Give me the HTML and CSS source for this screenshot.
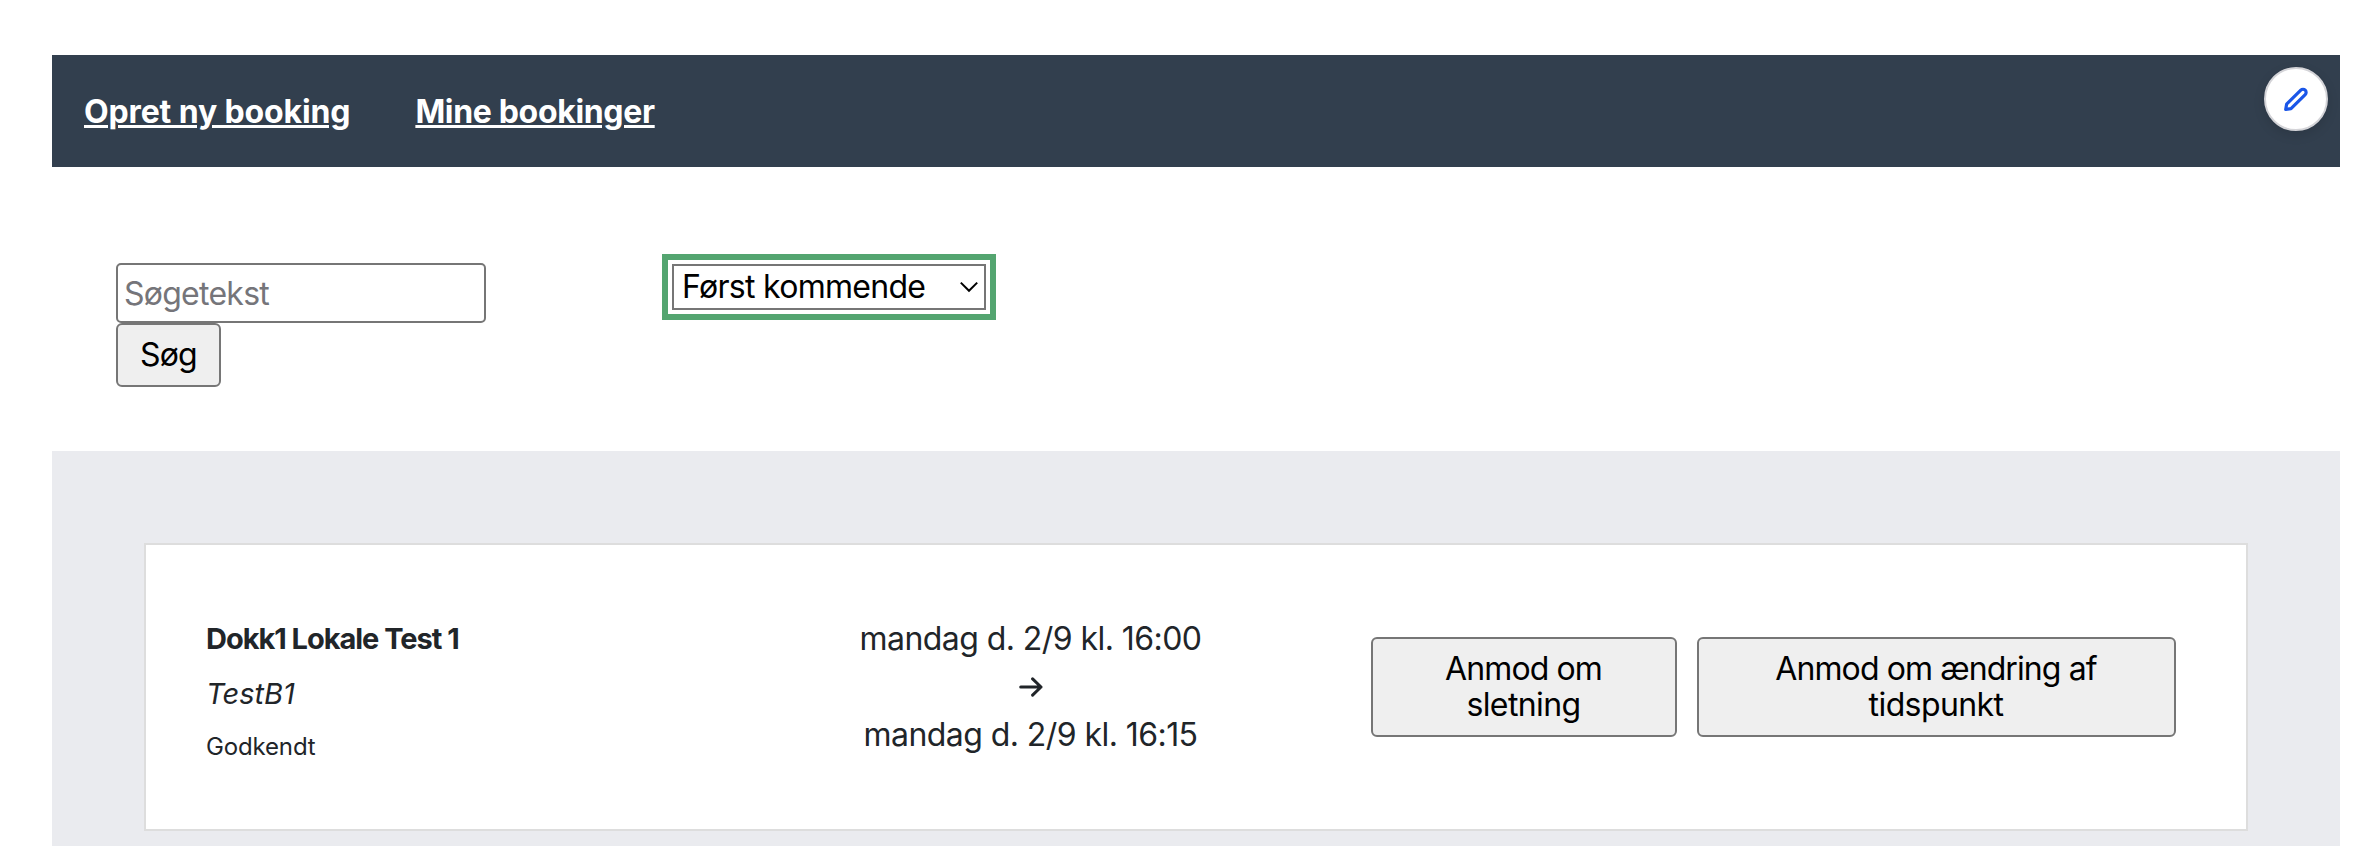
FILE: index.html
```
<!DOCTYPE html>
<html lang="da">
<head>
<meta charset="utf-8">
<title>Mine bookinger</title>
<link rel="stylesheet" href="styles.css">
</head>
<body>
<div class="page">
  <nav class="nav">
    <div class="nav-links">
      <a class="nav-link nav-create" href="#">Opret ny booking</a>
      <a class="nav-link nav-mine" href="#">Mine bookinger</a>
    </div>
    <button class="edit" aria-label="Rediger">
      <svg class="edit-icon" viewBox="0 0 28 28" fill="none" stroke="#1a56e8" stroke-width="3.2" stroke-linejoin="round">
        <path d="M3.7 24.4 4.6 19.2 18.8 5.2A3.1 3.1 0 0 1 23.2 9.6L9 23.6Z"/>
      </svg>
    </button>
  </nav>
  <form class="filters">
    <div class="search">
      <input class="search-input" type="text" placeholder="Søgetekst">
      <button class="btn search-btn" type="button">Søg</button>
    </div>
    <div class="sort">
      <span class="sort-label">Først kommende</span>
      <svg class="chevron" viewBox="0 0 20 12" fill="none" stroke="#000" stroke-width="2"><path d="M1.8 1.6 10 9.8 18.2 1.6"/></svg>
    </div>
  </form>
  <main class="list">
    <article class="card">
      <div class="info">
        <div class="room">Dokk1 Lokale Test 1</div>
        <div class="subject">TestB1</div>
        <div class="status">Godkendt</div>
      </div>
      <div class="time">
        <div>mandag d. 2/9 kl. 16:00</div>
        <div class="arrow"><svg class="arrow-icon" viewBox="0 0 24 20" fill="none" stroke="#212529" stroke-width="3" stroke-linecap="round" stroke-linejoin="round"><path d="M1.7 10H22M13.6 1.9 22 10 13.6 18.1"/></svg></div>
        <div>mandag d. 2/9 kl. 16:15</div>
      </div>
      <div class="actions">
        <button class="btn action delete">Anmod om<br><span class="second-line">sletning</span></button>
        <button class="btn action change">Anmod om ændring af<br><span class="second-line">tidspunkt</span></button>
      </div>
    </article>
  </main>
</div>
</body>
</html>
```
FILE: styles.css
```
* { box-sizing: border-box; }
body {
  margin: 0;
  height: 846px;
  overflow: hidden;
  background: #fff;
  color: #212529;
  font: 32px/48px Inter, "Liberation Sans", sans-serif;
}
.page { padding: 55px 32px 0 52px; }

.nav {
  display: flex;
  justify-content: space-between;
  align-items: flex-start;
  height: 112px;
  padding: 12px 12px 0 32px;
  background: #323f4e;
}
.nav-links { display: flex; gap: 65px; padding-top: 21px; }
.nav-link {
  color: #fff;
  font-weight: 700;
  text-decoration-line: underline;
  text-decoration-thickness: 3px;
  text-underline-offset: 2px;
  white-space: nowrap;
}
.nav-create { letter-spacing: -0.13px; }
.nav-mine { letter-spacing: -0.33px; }
.edit {
  display: flex;
  align-items: center;
  justify-content: center;
  width: 64px;
  height: 64px;
  padding: 0;
  border: 2px solid #d4d4d8;
  border-radius: 50%;
  background: #fff;
  box-shadow: 0 4px 12px rgba(0, 0, 0, 0.12);
}
.edit-icon { width: 28px; height: 28px; }

.filters {
  display: flex;
  align-items: flex-start;
  height: 284px;
  padding: 87px 64px 0;
}
.search { display: flex; flex-direction: column; align-items: flex-start; width: 546px; padding-top: 9px; }
.search-input {
  width: 370px;
  height: 60px;
  padding: 0 6px;
  border: 2px solid #767676;
  border-radius: 5px;
  background: #fff;
  font: inherit;
  letter-spacing: -0.75px;
}
.search-input::placeholder { color: #75757a; opacity: 1; }
.btn {
  border: 2px solid #767676;
  border-radius: 6px;
  background: #efefef;
  color: #000;
  font: inherit;
}
.search-btn { width: 105px; height: 64px; padding: 0; letter-spacing: -0.85px; }
.sort {
  display: flex;
  align-items: center;
  justify-content: space-between;
  width: 314px;
  height: 46px;
  margin: 10px;
  padding: 0 5px 0 8px;
  border: 2px solid #767676;
  outline: 6px solid #54a570;
  outline-offset: 4px;
  color: #000;
  letter-spacing: -0.7px;
}
.chevron { width: 20px; height: 12px; }

.list { height: 395px; padding: 92px; background: #eaebef; }
.card {
  display: flex;
  align-items: center;
  height: 288px;
  border: 2px solid #ddd;
  background: #fff;
  padding: 0 70px 0 60px;
}
.info { width: 560px; padding-top: 8px; }
.room { font-size: 29px; font-weight: 700; line-height: 55px; letter-spacing: -1.03px; }
.subject { font-size: 29px; font-style: italic; line-height: 55px; }
.status { font-size: 24px; line-height: 51px; letter-spacing: -0.15px; }
.time { width: 529px; text-align: center; letter-spacing: -0.56px; }
.arrow { display: flex; align-items: center; justify-content: center; height: 48px; }
.arrow-icon { width: 24px; height: 20px; }
.actions { display: flex; gap: 20px; margin-left: auto; }
.action { height: 100px; padding: 0 1px 0 0; line-height: 36px; letter-spacing: -0.9px; }
.second-line { letter-spacing: -0.6px; }
.delete { width: 306px; }
.change { width: 479px; }
```
